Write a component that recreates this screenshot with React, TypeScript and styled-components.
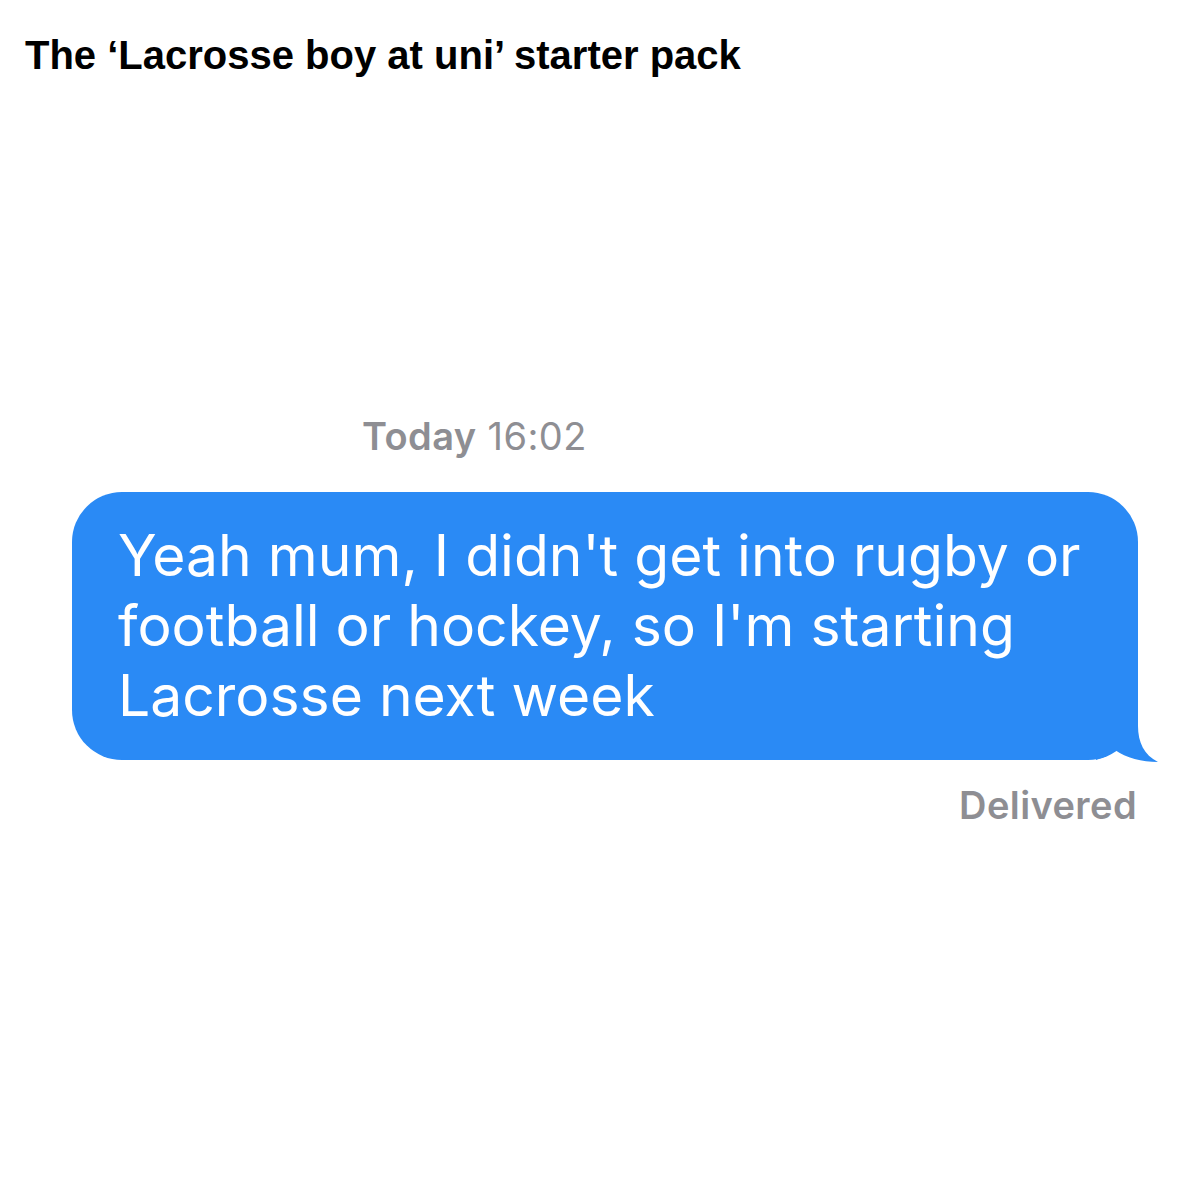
import styled, { createGlobalStyle } from "styled-components";

const GlobalStyle = createGlobalStyle`
  html, body {
    margin: 0;
    padding: 0;
    background: #ffffff;
  }
`;

const Page = styled.div`
  width: 1200px;
  height: 1200px;
  display: flex;
  flex-direction: column;
  background: #ffffff;
  overflow: hidden;
`;

const Heading = styled.h1`
  margin: 0;
  padding: 34px 0 0 25px;
  font-family: "Liberation Sans", Arial, sans-serif;
  font-weight: 700;
  font-size: 40px;
  line-height: 42px;
  color: #000000;
`;

const Thread = styled.div`
  display: flex;
  flex-direction: column;
  margin-top: 338px;
  padding: 0 60px 0 72px;
`;

const Stamp = styled.div`
  align-self: flex-start;
  margin-left: 290px;
  font-family: Inter, "Open Sans", sans-serif;
  font-size: 38px;
  line-height: 44px;
  letter-spacing: 0.4px;
  color: #8e8e93;
  b {
    font-weight: 600;
  }
`;

const Bubble = styled.div`
  position: relative;
  margin-top: 34px;
  width: 1066px;
  box-sizing: border-box;
  padding: 29px 30px 29px 46px;
  background: #2a8af5;
  border-radius: 50px;
  font-family: Inter, "Open Sans", sans-serif;
  font-size: 57px;
  line-height: 70px;
  color: #ffffff;
`;

// tail hangs off the bottom-right corner of the bubble
const Tail = styled.svg`
  position: absolute;
  right: -20px;
  bottom: -2px;
  width: 62px;
  height: 62px;
`;

const Status = styled.div`
  align-self: flex-end;
  margin-top: 23px;
  margin-right: 3px;
  font-family: Inter, "Open Sans", sans-serif;
  font-weight: 600;
  font-size: 38px;
  line-height: 44px;
  letter-spacing: 0.4px;
  color: #8e8e93;
`;

export default function App() {
  return (
    <>
      <GlobalStyle />
      <Page>
        <Heading>The ‘Lacrosse boy at uni’ starter pack</Heading>
        <Thread>
          <Stamp>
            <b>Today</b> 16:02
          </Stamp>
          <Bubble>
            Yeah mum, I didn't get into rugby or
            <br />
            football or hockey, so I'm starting
            <br />
            Lacrosse next week
            <Tail viewBox="0 0 62 62">
              <path
                d="M0 0 H42 V26 C42 42 48 55 62 62 C46 62 30 58 19 50 C13 55 7 58 0 60 Z"
                fill="#2a8af5"
              />
            </Tail>
          </Bubble>
          <Status>Delivered</Status>
        </Thread>
      </Page>
    </>
  );
}
